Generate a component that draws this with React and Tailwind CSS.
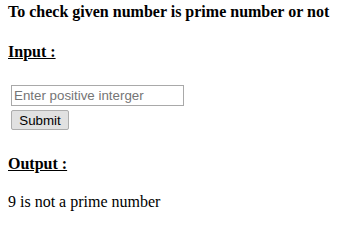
export default function App() {
  return (
    <div className="w-[338px] h-[226px] bg-white text-black px-[8px] pt-[3px]" style={{ fontFamily: '"Liberation Serif", "Times New Roman", serif' }}>
      <div className="text-[16px] leading-[18px] font-bold whitespace-nowrap">To check given number is prime number or not</div>
      <div className="mt-[22px] text-[16px] leading-[18px] font-bold underline">Input :</div>
      <div className="mt-[24px] flex flex-col items-start pl-[3px]" style={{ fontFamily: '"Liberation Sans", Arial, sans-serif' }}>
        <input
          type="text"
          placeholder="Enter positive interger"
          className="w-[173px] h-[21px] border border-[#a9a9a9] px-[2px] text-[13.33px] leading-[15px] placeholder:text-[#757575] outline-none bg-white"
        />
        <button className="mt-[4px] w-[58px] h-[20px] border border-[#adadad] rounded-[2px] bg-[#e1e1e1] text-[13.33px] leading-[15px] text-black">Submit</button>
      </div>
      <div className="mt-[25px] text-[16px] leading-[18px] font-bold underline">Output :</div>
      <div className="mt-[20px] text-[16px] leading-[18px]">9 is not a prime number</div>
    </div>
  );
}
